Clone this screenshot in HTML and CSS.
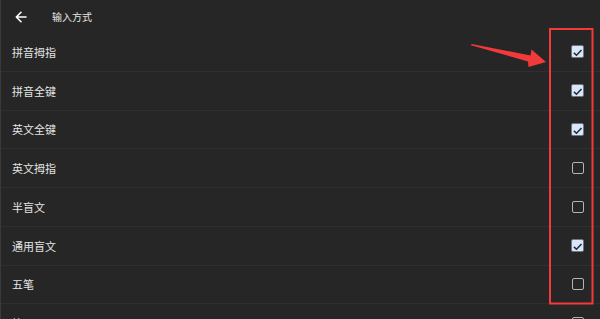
FILE: index.html
```html
<!DOCTYPE html>
<html lang="zh">
<head>
<meta charset="utf-8">
<link rel="stylesheet" href="styles.css">
</head>
<body>
<div class="screen">
  <header class="topbar">
    <svg class="back" width="12" height="12" viewBox="0 0 12 12"><path d="M11 6H1.5M6 1.3L1.3 6L6 10.7" fill="none" stroke="#fff" stroke-width="1.6" stroke-linecap="round" stroke-linejoin="round"/></svg>
    <span class="title">输入方式</span>
  </header>
  <ul class="list">
    <li class="row"><span class="label">拼音拇指</span><span class="cb checked"><svg viewBox="0 0 13 13"><path d="M2.9 7.9L5.5 10.3L10.5 5" fill="none" stroke="#1f2a3a" stroke-width="1.5"/></svg></span></li>
    <li class="row"><span class="label">拼音全键</span><span class="cb checked"><svg viewBox="0 0 13 13"><path d="M2.9 7.9L5.5 10.3L10.5 5" fill="none" stroke="#1f2a3a" stroke-width="1.5"/></svg></span></li>
    <li class="row"><span class="label">英文全键</span><span class="cb checked"><svg viewBox="0 0 13 13"><path d="M2.9 7.9L5.5 10.3L10.5 5" fill="none" stroke="#1f2a3a" stroke-width="1.5"/></svg></span></li>
    <li class="row"><span class="label">英文拇指</span><span class="cb"></span></li>
    <li class="row"><span class="label">半盲文</span><span class="cb"></span></li>
    <li class="row"><span class="label">通用盲文</span><span class="cb checked"><svg viewBox="0 0 13 13"><path d="M2.9 7.9L5.5 10.3L10.5 5" fill="none" stroke="#1f2a3a" stroke-width="1.5"/></svg></span></li>
    <li class="row"><span class="label">五笔</span><span class="cb"></span></li>
    <li class="row"><span class="label">笔画</span><span class="cb"></span></li>
  </ul>
  <svg class="annot" width="600" height="319" viewBox="0 0 600 319">
    <rect x="550" y="29" width="42.5" height="274.5" fill="none" stroke="#f23a3a" stroke-width="2"/>
    <polygon points="471.5,44 530.5,55.5 531.5,49.5 546,62 528.5,67 528,61.5 471,45.2" fill="#f23a3a"/>
  </svg>
</div>
</body>
</html>
```
FILE: styles.css
```css
html, body {
  margin: 0;
  padding: 0;
  background: #262626;
}
.screen {
  position: relative;
  width: 600px;
  height: 319px;
  overflow: hidden;
  background: #262626;
  border-left: 1px solid #3a3a3a;
  box-sizing: border-box;
  font-family: "Noto Sans CJK SC", "Noto Sans", sans-serif;
}
.topbar {
  height: 33px;
  display: flex;
  align-items: center;
  padding-left: 14px;
  box-sizing: border-box;
}
.back {
  display: block;
  margin-right: 25px;
}
.title {
  color: #e8e8e8;
  font-size: 10px;
}
.list {
  list-style: none;
  margin: 0;
  padding: 0;
}
.row {
  height: 38.75px;
  box-sizing: border-box;
  border-bottom: 1px solid #2f2f2f;
  display: flex;
  align-items: center;
  justify-content: space-between;
  padding: 0 16px 0 11px;
}
.label {
  color: #e4e4e4;
  font-size: 11px;
}
.cb {
  width: 12px;
  height: 12px;
  margin-right: 0.5px;
  box-sizing: border-box;
  border: 1.7px solid #b4b4b4;
  border-radius: 2px;
  display: block;
}
.cb.checked {
  width: 13px;
  height: 13px;
  margin-right: 0;
  background: #d9e6f8;
  border: 1px solid #6f7680;
  position: relative;
}
.cb svg {
  position: absolute;
  left: -1px;
  top: -1px;
  width: 13px;
  height: 13px;
}
.annot {
  position: absolute;
  left: -1px;
  top: 0;
  pointer-events: none;
}
```
